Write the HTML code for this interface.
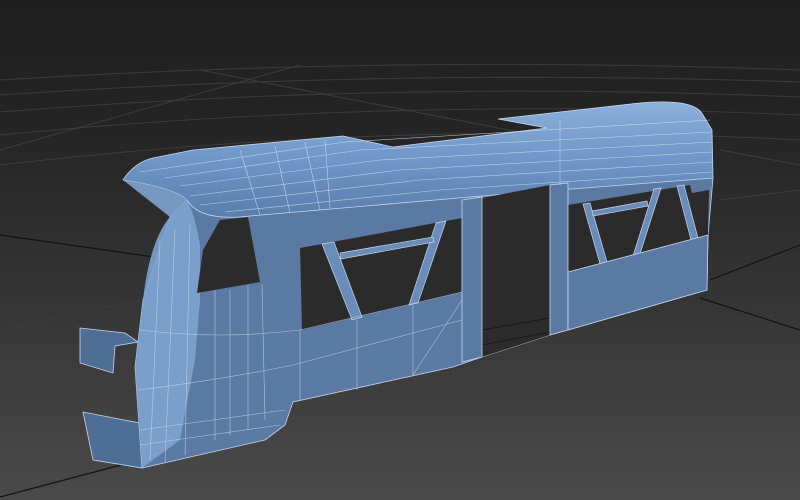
<!DOCTYPE html>
<html><head><meta charset="utf-8"><style>
html,body{margin:0;padding:0;width:800px;height:500px;overflow:hidden;background:#222}
svg{display:block}
</style></head><body>
<svg width="800" height="500" viewBox="0 0 800 500" xmlns="http://www.w3.org/2000/svg">
<defs>
<linearGradient id="bg" x1="0" y1="0" x2="0" y2="1">
<stop offset="0" stop-color="#1f1f1f"/>
<stop offset="0.25" stop-color="#242424"/>
<stop offset="0.6" stop-color="#353535"/>
<stop offset="1" stop-color="#4a4a4a"/>
</linearGradient>
<linearGradient id="roof" x1="0" y1="0" x2="0" y2="1">
<stop offset="0" stop-color="#8db0dc"/>
<stop offset="0.5" stop-color="#6f96c8"/>
<stop offset="1" stop-color="#5a7eac"/>
</linearGradient>
</defs>
<rect width="800" height="500" fill="url(#bg)"/>
<!-- grid -->
<g stroke="#3c3c3c" stroke-width="1" fill="none">
<path d="M0 80 Q400 55 800 70"/>
<path d="M0 95 Q400 68 800 82"/>
<path d="M0 112 Q400 80 800 97"/>
<path d="M0 135 Q400 96 800 115"/>
<path d="M0 165 Q400 118 800 140"/>
<path d="M0 330 L140 300"/>
<path d="M300 65 L0 150"/>
<path d="M200 70 L560 140"/>
<path d="M720 150 L800 165"/>
<path d="M720 200 L800 190"/>
</g>
<g stroke="#111" stroke-width="1.2" fill="none">
<path d="M0 235 L210 265"/>
<path d="M700 298 L800 330"/>
<path d="M0 497 L140 460"/>
<path d="M710 280 L800 245"/>
</g>
<!-- side flap -->
<polygon points="80,328 125,333 138,342 115,346 113,373 80,363" fill="#4f6e96" stroke="#c8d6ea" stroke-width="0.8"/>
<!-- bottom skirt -->
<polygon points="83,412 150,425 142,468 93,460" fill="#4f6e96" stroke="#c8d6ea" stroke-width="0.8"/>
<!-- main body side -->
<polygon points="187,200 470,195 713,178 712,190 708,235 707,290 568,330 550,335 482,357 453,367 293,402 285,425 265,440 142,468 135,367 143,300 170,217" fill="#5a7aa3" stroke="#c8d6ea" stroke-width="0.8"/>
<!-- roof -->
<path d="M123,180 Q135,162 153,158 L193,150 L343,136 L393,147 L547,128 L498,119 L640,103 Q695,98 703,115 L712,130 L713,178 L470,197 L250,216 Q200,222 187,200 Q175,188 123,180 Z" fill="url(#roof)" stroke="#c8d6ea" stroke-width="0.8"/>
<!-- nose front -->
<path d="M123,180 Q175,188 187,200 Q195,215 200,245 L200,300 L195,360 L180,440 L142,468 L135,367 L143,300 Q150,240 170,217 Z" fill="#7ea3cf" opacity="0.9"/>
<!-- windows (see-through) -->
<g fill="#2b2b2b">
<polygon points="220,220 248,217 260,282 197,293 203,250"/>
<polygon points="300,248 462,218 462,292 302,330"/>
<polygon points="482,198 550,185 550,335 482,357"/>
<polygon points="568,205 690,185 692,193 709,190 708,235 568,272"/>
</g>
<g stroke="#1a1a1a" stroke-width="1" fill="none">
<path d="M482,330 L550,318"/><path d="M482,345 L550,332"/>
</g>
<!-- struts -->
<g fill="#6a8cb8" stroke="#c8d6ea" stroke-width="0.7">
<polygon points="322,244 334,242 362,317 352,320"/>
<polygon points="436,223 446,221 418,303 409,305"/>
<polygon points="340,253 433,237 434,242 341,259"/>
<polygon points="583,204 590,203 607,262 600,264"/>
<polygon points="654,189 661,188 640,254 633,256"/>
<polygon points="677,186 684,185 698,238 691,240"/>
<polygon points="592,211 647,201 648,206 593,216"/>
</g>
<!-- pillars -->
<g fill="#5a7aa3" stroke="#c8d6ea" stroke-width="0.8">
<polygon points="462,200 482,197 482,357 462,362"/>
<polygon points="550,185 568,183 568,330 550,335"/>
<polygon points="568,272 708,235 707,290 568,330"/>
</g>
<!-- wire lines roof -->
<g stroke="#d4e2f3" stroke-width="0.6" fill="none" opacity="0.8">
<path d="M140,172 L345,142 L710,120"/>
<path d="M165,178 L360,150 L712,132"/>
<path d="M180,186 L380,160 L712,142"/>
<path d="M190,196 L400,170 L712,152"/>
<path d="M200,205 L420,180 L712,162"/>
<path d="M225,212 L440,190 L712,172"/>
<path d="M240,150 L260,215"/><path d="M275,146 L290,213"/><path d="M305,142 L320,210"/><path d="M325,140 L330,208"/>
<path d="M560,120 L560,185"/>
</g>
<!-- wire lines body -->
<g stroke="#d4e2f3" stroke-width="0.6" fill="none" opacity="0.7">
<path d="M160,240 L150,460"/><path d="M175,230 L165,462"/><path d="M190,225 L185,455"/>
<path d="M215,290 L215,440"/><path d="M230,290 L230,435"/><path d="M248,285 L248,430"/><path d="M262,284 L265,420"/>
<path d="M300,330 L300,400"/><path d="M357,320 L357,390"/><path d="M413,305 L413,375"/>
<path d="M140,330 Q220,340 300,330 L462,292"/>
<path d="M138,390 Q220,380 293,365 L462,320"/>
<path d="M140,430 L285,410"/><path d="M140,445 L280,425"/>
<path d="M413,375 L462,300"/>
</g>
</svg>
</body></html>
